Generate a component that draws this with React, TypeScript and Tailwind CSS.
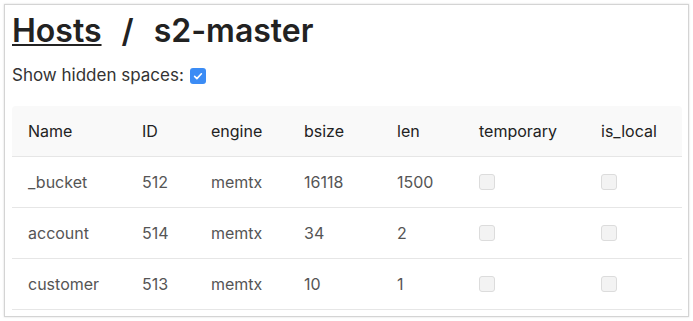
const columns = ['Name', 'ID', 'engine', 'bsize', 'len', 'temporary', 'is_local'];

const spaces = [
  { name: '_bucket', id: 512, engine: 'memtx', bsize: 16118, len: 1500 },
  { name: 'account', id: 514, engine: 'memtx', bsize: 34, len: 2 },
  { name: 'customer', id: 513, engine: 'memtx', bsize: 10, len: 1 },
];

const colWidths = ['w-[114px]', 'w-[69px]', 'w-[93px]', 'w-[93px]', 'w-[82px]', 'w-[122px]', ''];

function GrayBox() {
  return <div className="w-4 h-4 rounded-[3px] border border-[#dcdcdc] bg-[#f3f3f3]" />;
}

export default function App() {
  return (
    <div className="w-[693px] h-[321px] bg-white p-1" style={{ fontFamily: 'Inter, "Open Sans", sans-serif' }}>
      <div className="h-[313px] border border-[#d4d4d4] shadow-[0_0_2px_rgba(0,0,0,0.15)] px-[7px] pt-[3px]">
        {/* Title */}
        <h1 className="flex items-center text-[32px] font-semibold text-[#222] leading-[44px] mt-px">
          <a href="#" className="underline decoration-2 underline-offset-[2px]">Hosts</a>
          <span className="mx-[20px]">/</span>
          <span>s2-master</span>
        </h1>

        {/* Toggle */}
        <div className="flex items-center mt-[10px] text-[17px] text-[#333]">
          <span>Show hidden spaces:</span>
          <span className="ml-[6px] w-4 h-4 rounded-[3px] bg-[#3b8cf5] flex items-center justify-center">
            <svg viewBox="0 0 16 16" className="w-3 h-3" fill="none" stroke="white" strokeWidth="2.2" strokeLinecap="round" strokeLinejoin="round">
              <path d="M3.5 8.5l3 3 6-6.5" />
            </svg>
          </span>
        </div>

        {/* Table */}
        <div className="mt-[17px] w-[670px] text-[16px]">
          <div className="flex items-center h-[51px] bg-[#f9f9f9] rounded-t-[4px] border-b border-[#e6e6e6] text-[#222] pl-4">
            {columns.map((c, i) => (
              <div key={c} className={colWidths[i]}>{c}</div>
            ))}
          </div>
          {spaces.map((s) => (
            <div key={s.name} className="flex items-center h-[51px] border-b border-[#e6e6e6] text-[#555] pl-4">
              <div className={colWidths[0]}>{s.name}</div>
              <div className={colWidths[1]}>{s.id}</div>
              <div className={colWidths[2]}>{s.engine}</div>
              <div className={colWidths[3]}>{s.bsize}</div>
              <div className={colWidths[4]}>{s.len}</div>
              <div className={colWidths[5]}><GrayBox /></div>
              <div><GrayBox /></div>
            </div>
          ))}
        </div>
      </div>
    </div>
  );
}
